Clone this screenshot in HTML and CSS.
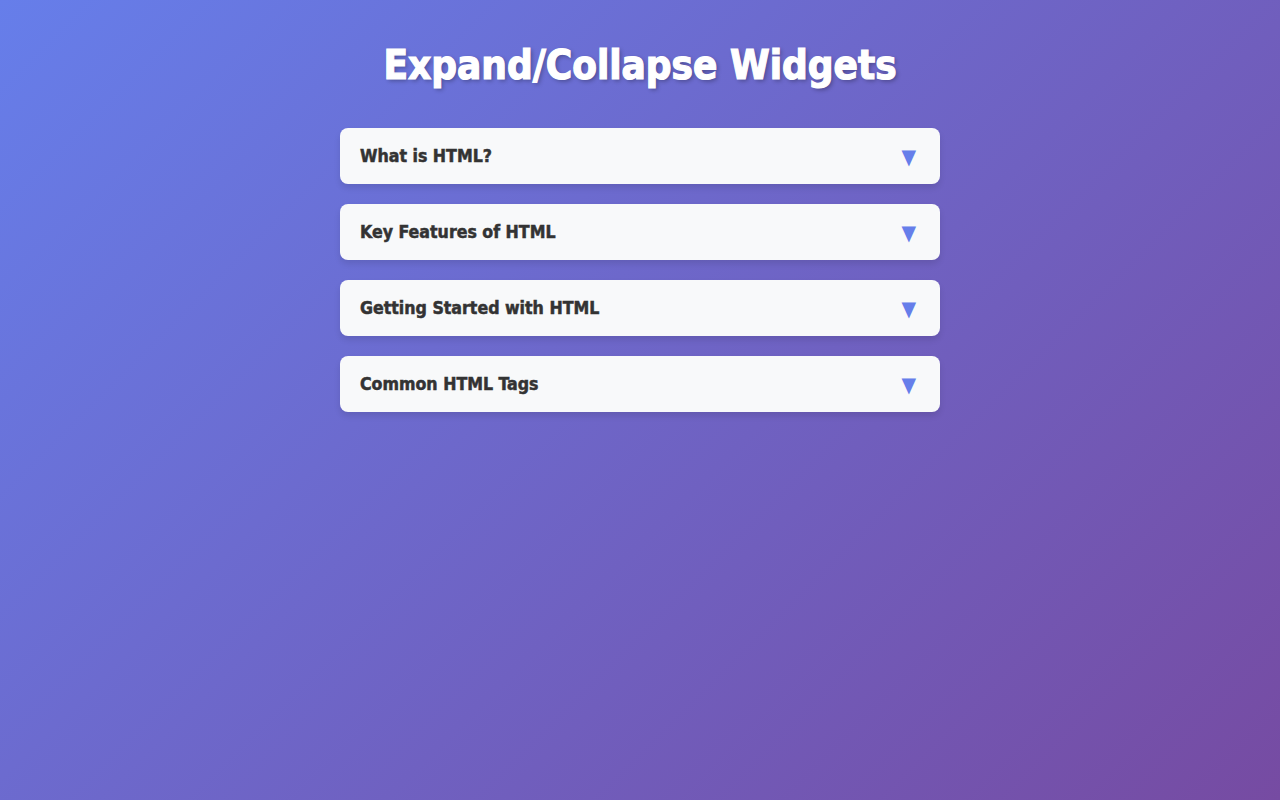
FILE: index.html
```html
<!DOCTYPE html>
<html lang="en">
<head>
<meta charset="UTF-8">
<title>Expand/Collapse Widgets</title>
<link rel="stylesheet" href="styles.css">
</head>
<body>
<div class="container">
  <h1 class="title">Expand/Collapse Widgets</h1>
  <div class="accordion">
    <div class="item"><div class="header"><span class="label">What is HTML?</span><span class="arrow">▼</span></div></div>
    <div class="item"><div class="header"><span class="label">Key Features of HTML</span><span class="arrow">▼</span></div></div>
    <div class="item"><div class="header"><span class="label">Getting Started with HTML</span><span class="arrow">▼</span></div></div>
    <div class="item"><div class="header"><span class="label">Common HTML Tags</span><span class="arrow">▼</span></div></div>
  </div>
</div>
</body>
</html>
```
FILE: styles.css
```css
* { box-sizing: border-box; }
html, body { margin: 0; padding: 0; }
body {
  min-height: 100vh;
  padding: 20px;
  font-family: "DejaVu Sans Condensed", "DejaVu Sans", sans-serif;
  background: linear-gradient(135deg, #667eea 0%, #764ba2 100%);
}
.container {
  max-width: 600px;
  margin: 0 auto;
}
.title {
  color: #fff;
  text-align: center;
  font-size: 2.5em;
  font-weight: bold;
  margin: 22px 0 40px;
  -webkit-text-stroke: 1.2px #fff;
  text-shadow: 2px 2px 4px rgba(0,0,0,0.3);
}
.accordion {
  display: flex;
  flex-direction: column;
  gap: 20px;
}
.item {
  background: #f8f9fa;
  border-radius: 8px;
  box-shadow: 0 4px 6px rgba(0,0,0,0.1);
  overflow: hidden;
}
.header {
  display: flex;
  justify-content: space-between;
  align-items: center;
  padding: 20px;
  height: 56px;
  font-size: 1.1em;
  font-weight: bold;
  color: #333;
}
.label {
  -webkit-text-stroke: 0.5px #333;
}
.arrow {
  color: #667eea;
  font-size: 1.2em;
  font-weight: normal;
  margin-right: 4px;
}
```
